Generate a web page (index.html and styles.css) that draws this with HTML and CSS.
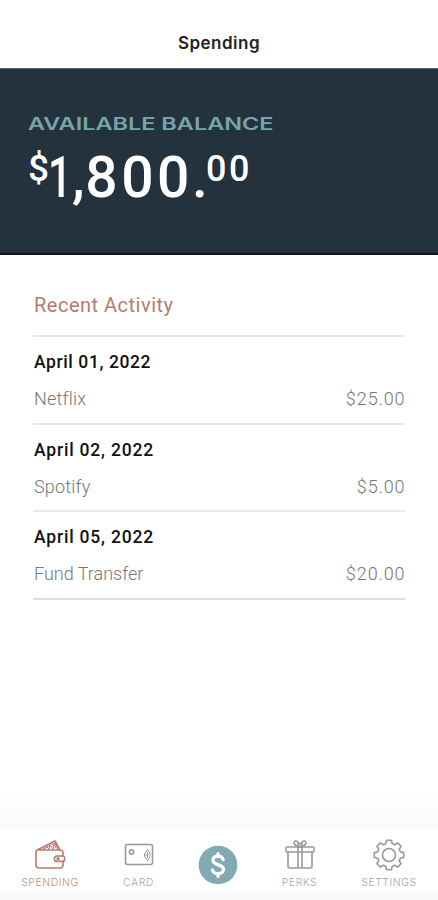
FILE: index.html
```html
<!DOCTYPE html>
<html lang="en">
<head>
<meta charset="utf-8">
<title>Spending</title>
<link rel="stylesheet" href="styles.css">
</head>
<body>
<div class="app">
  <header class="topbar"><h1>Spending</h1></header>
  <section class="balance">
    <div class="balance-label">AVAILABLE BALANCE</div>
    <div class="amount"><span class="currency">$</span><span class="whole"><span class="one">1</span><span class="comma">,</span>800<span class="point">.</span></span><span class="cents">00</span></div>
  </section>
  <main class="activity">
    <h2>Recent Activity</h2>
    <article class="entry">
      <h3>April 01, 2022</h3>
      <div class="row"><span>Netflix</span><span class="price">$25.00</span></div>
    </article>
    <article class="entry">
      <h3>April 02, 2022</h3>
      <div class="row"><span>Spotify</span><span class="price">$5.00</span></div>
    </article>
    <article class="entry">
      <h3>April 05, 2022</h3>
      <div class="row"><span class="tight">Fund Transfer</span><span class="price">$20.00</span></div>
    </article>
  </main>
  <nav class="tabs">
    <a class="tab active">
      <svg width="32" height="32" viewBox="0 0 32 32"><path d="M5 11H26Q29 11 29 14V17M29 22V26Q29 29 26 29H5Q2 29 2 26V13Q2 11 5 10L21 2L26 11"/><path d="M29 17H23a2.7 2.7 0 0 0 0 5.4h6q1.5 0 1.500-1.500v-2.400Q30.500 17 29 17z"/><circle cx="24" cy="19.700" r=".8"/><path class="fine" d="M8 10.500L21 4l3 6.500M10 10l3-2 2 2 1-4 3 4 1-5 2 4"/></svg>
      <span>SPENDING</span>
    </a>
    <a class="tab">
      <svg width="32" height="32" viewBox="0 0 32 32"><rect x="2.500" y="5.500" width="27" height="20" rx="2"/><circle cx="8.500" cy="13" r="2.200"/><path class="fine" d="M24.500 10.500l2.300 3v5l-2.300 3M24.500 10.500l-2 3M24.500 21.500l-2-3M21.500 14.500v3M24.500 13.500v5M21.500 16h3"/></svg>
      <span>CARD</span>
    </a>
    <a class="tab transfer">
      <svg width="40" height="40" viewBox="0 0 40 40"><circle class="disc" cx="20" cy="20" r="19.300"/><path class="dollar" d="M25.300 14.800C24.500 12.300 22.500 11.200 20 11.200c-3 0-5 1.600-5 4.100 0 5.900 10.500 3.200 10.500 9 0 2.600-2.400 4.300-5.400 4.300-2.900 0-4.900-1.300-5.700-3.700M20 8.500v3M20 28.500v3"/></svg>
    </a>
    <a class="tab">
      <svg width="32" height="32" viewBox="0 0 32 32"><rect x="2" y="8" width="28" height="5" rx="1"/><path d="M4 13v14q0 2 2 2h20q2 0 2-2V13M14 8v21M18 8v21M14.500 7C10 7.500 9 2.500 11.500 2s4 3 3 5M17.500 7c4.500.5 5.500-4.500 3-5s-4 3-3 5"/><rect x="14" y="4.500" width="4" height="3.500" rx="1"/></svg>
      <span>PERKS</span>
    </a>
    <a class="tab">
      <svg width="32" height="32" viewBox="-16 -16 32 32"><path d="M-2.400-14.700H2.400L3.200-11.200L5.700-10.200L8.700-12.100L12.100-8.700L10.200-5.700L11.200-3.200L14.700-2.400V2.400L11.200 3.200L10.200 5.700L12.100 8.700L8.700 12.100L5.700 10.200L3.200 11.200L2.400 14.700H-2.400L-3.200 11.200L-5.700 10.200L-8.700 12.100L-12.100 8.700L-10.200 5.700L-11.200 3.200L-14.700 2.400V-2.400L-11.200-3.200L-10.200-5.700L-12.100-8.700L-8.700-12.100L-5.700-10.200L-3.200-11.200z"/><circle r="6.500"/></svg>
      <span>SETTINGS</span>
    </a>
  </nav>
</div>
</body>
</html>
```
FILE: styles.css
```css
* { box-sizing: border-box; }
body { margin: 0; background: #fff; font-family: Roboto, sans-serif; }
h1, h2, h3 { margin: 0; }
.app { width: 438px; height: 900px; display: flex; flex-direction: column; overflow: hidden; }
.topbar { height: 68px; padding-top: 32px; text-align: center; }
h1 { font: 600 17px/22px Inter, sans-serif; color: #222; letter-spacing: .5px; }
.balance { height: 187px; padding: 45px 28px 0; background: #24323d; border-top: 1px solid #52616a; border-bottom: 2px solid #10131d; }
.balance-label { width: max-content; font: 600 17px/20px Inter, sans-serif; color: #76a5aa; transform: scaleX(1.38); transform-origin: left; }
.amount { display: flex; align-items: flex-start; color: #fff; font-weight: 500; white-space: nowrap; padding-top: 12px; }
.currency { width: 20px; padding-top: 4px; font-size: 37px; line-height: 38px; }
.whole { width: 158px; font-size: 57px; line-height: 64px; letter-spacing: 3.500px; }
.one { display: inline-block; width: 24px; letter-spacing: 0; transform: scaleX(.73); transform-origin: left; }
.comma { letter-spacing: .5px; }
.point { margin-left: -1px; letter-spacing: 0; }
.cents { padding-top: 2px; font-size: 36px; line-height: 42px; letter-spacing: 2.500px; }
.activity { flex: 1; padding: 38px 33px 0; background: linear-gradient(#fff 94%, #f9f9f9); }
h2 { height: 42px; padding-left: 1px; font-size: 20px; line-height: 24px; font-weight: 400; color: #b47c6d; letter-spacing: .5px; }
.entry { height: 87.500px; padding: 15px 0 0 1px; border-top: 2px solid #e8e8e8; }
.entry:last-child { height: 89.500px; border-bottom: 2px solid #dedede; }
h3 { font-size: 17.500px; line-height: 20px; font-weight: 500; color: #111; letter-spacing: .8px; }
.entry:first-of-type h3 { letter-spacing: .6px; }
.row { display: flex; justify-content: space-between; padding-top: 16px; font-size: 18px; line-height: 22px; font-weight: 300; color: #777; letter-spacing: .2px; }
.tight { letter-spacing: 0; }
.price { letter-spacing: .9px; margin-right: -.5px; }
.tabs { height: 72px; flex: none; display: grid; grid-template-columns: 100px 77px 82px 81px 98px; border-bottom: 8px solid #fafafa; background: #fff; }
.tab { display: flex; flex-direction: column; align-items: center; padding-top: 11px; color: #999; font: 300 10.500px/14px Inter, sans-serif; }
.tab span { padding-top: 5px; letter-spacing: .5px; opacity: .85; }
.tab svg { display: block; fill: none; stroke: currentColor; stroke-width: 1.600; stroke-linejoin: round; stroke-linecap: round; }
.tab.active { color: #b47c6d; }
.tab .fine { stroke-width: 1; }
.transfer { padding-top: 17px; }
.tab .disc { fill: #82aab2; stroke: none; }
.tab .dollar { stroke: #fff; stroke-width: 3.200; }
```
